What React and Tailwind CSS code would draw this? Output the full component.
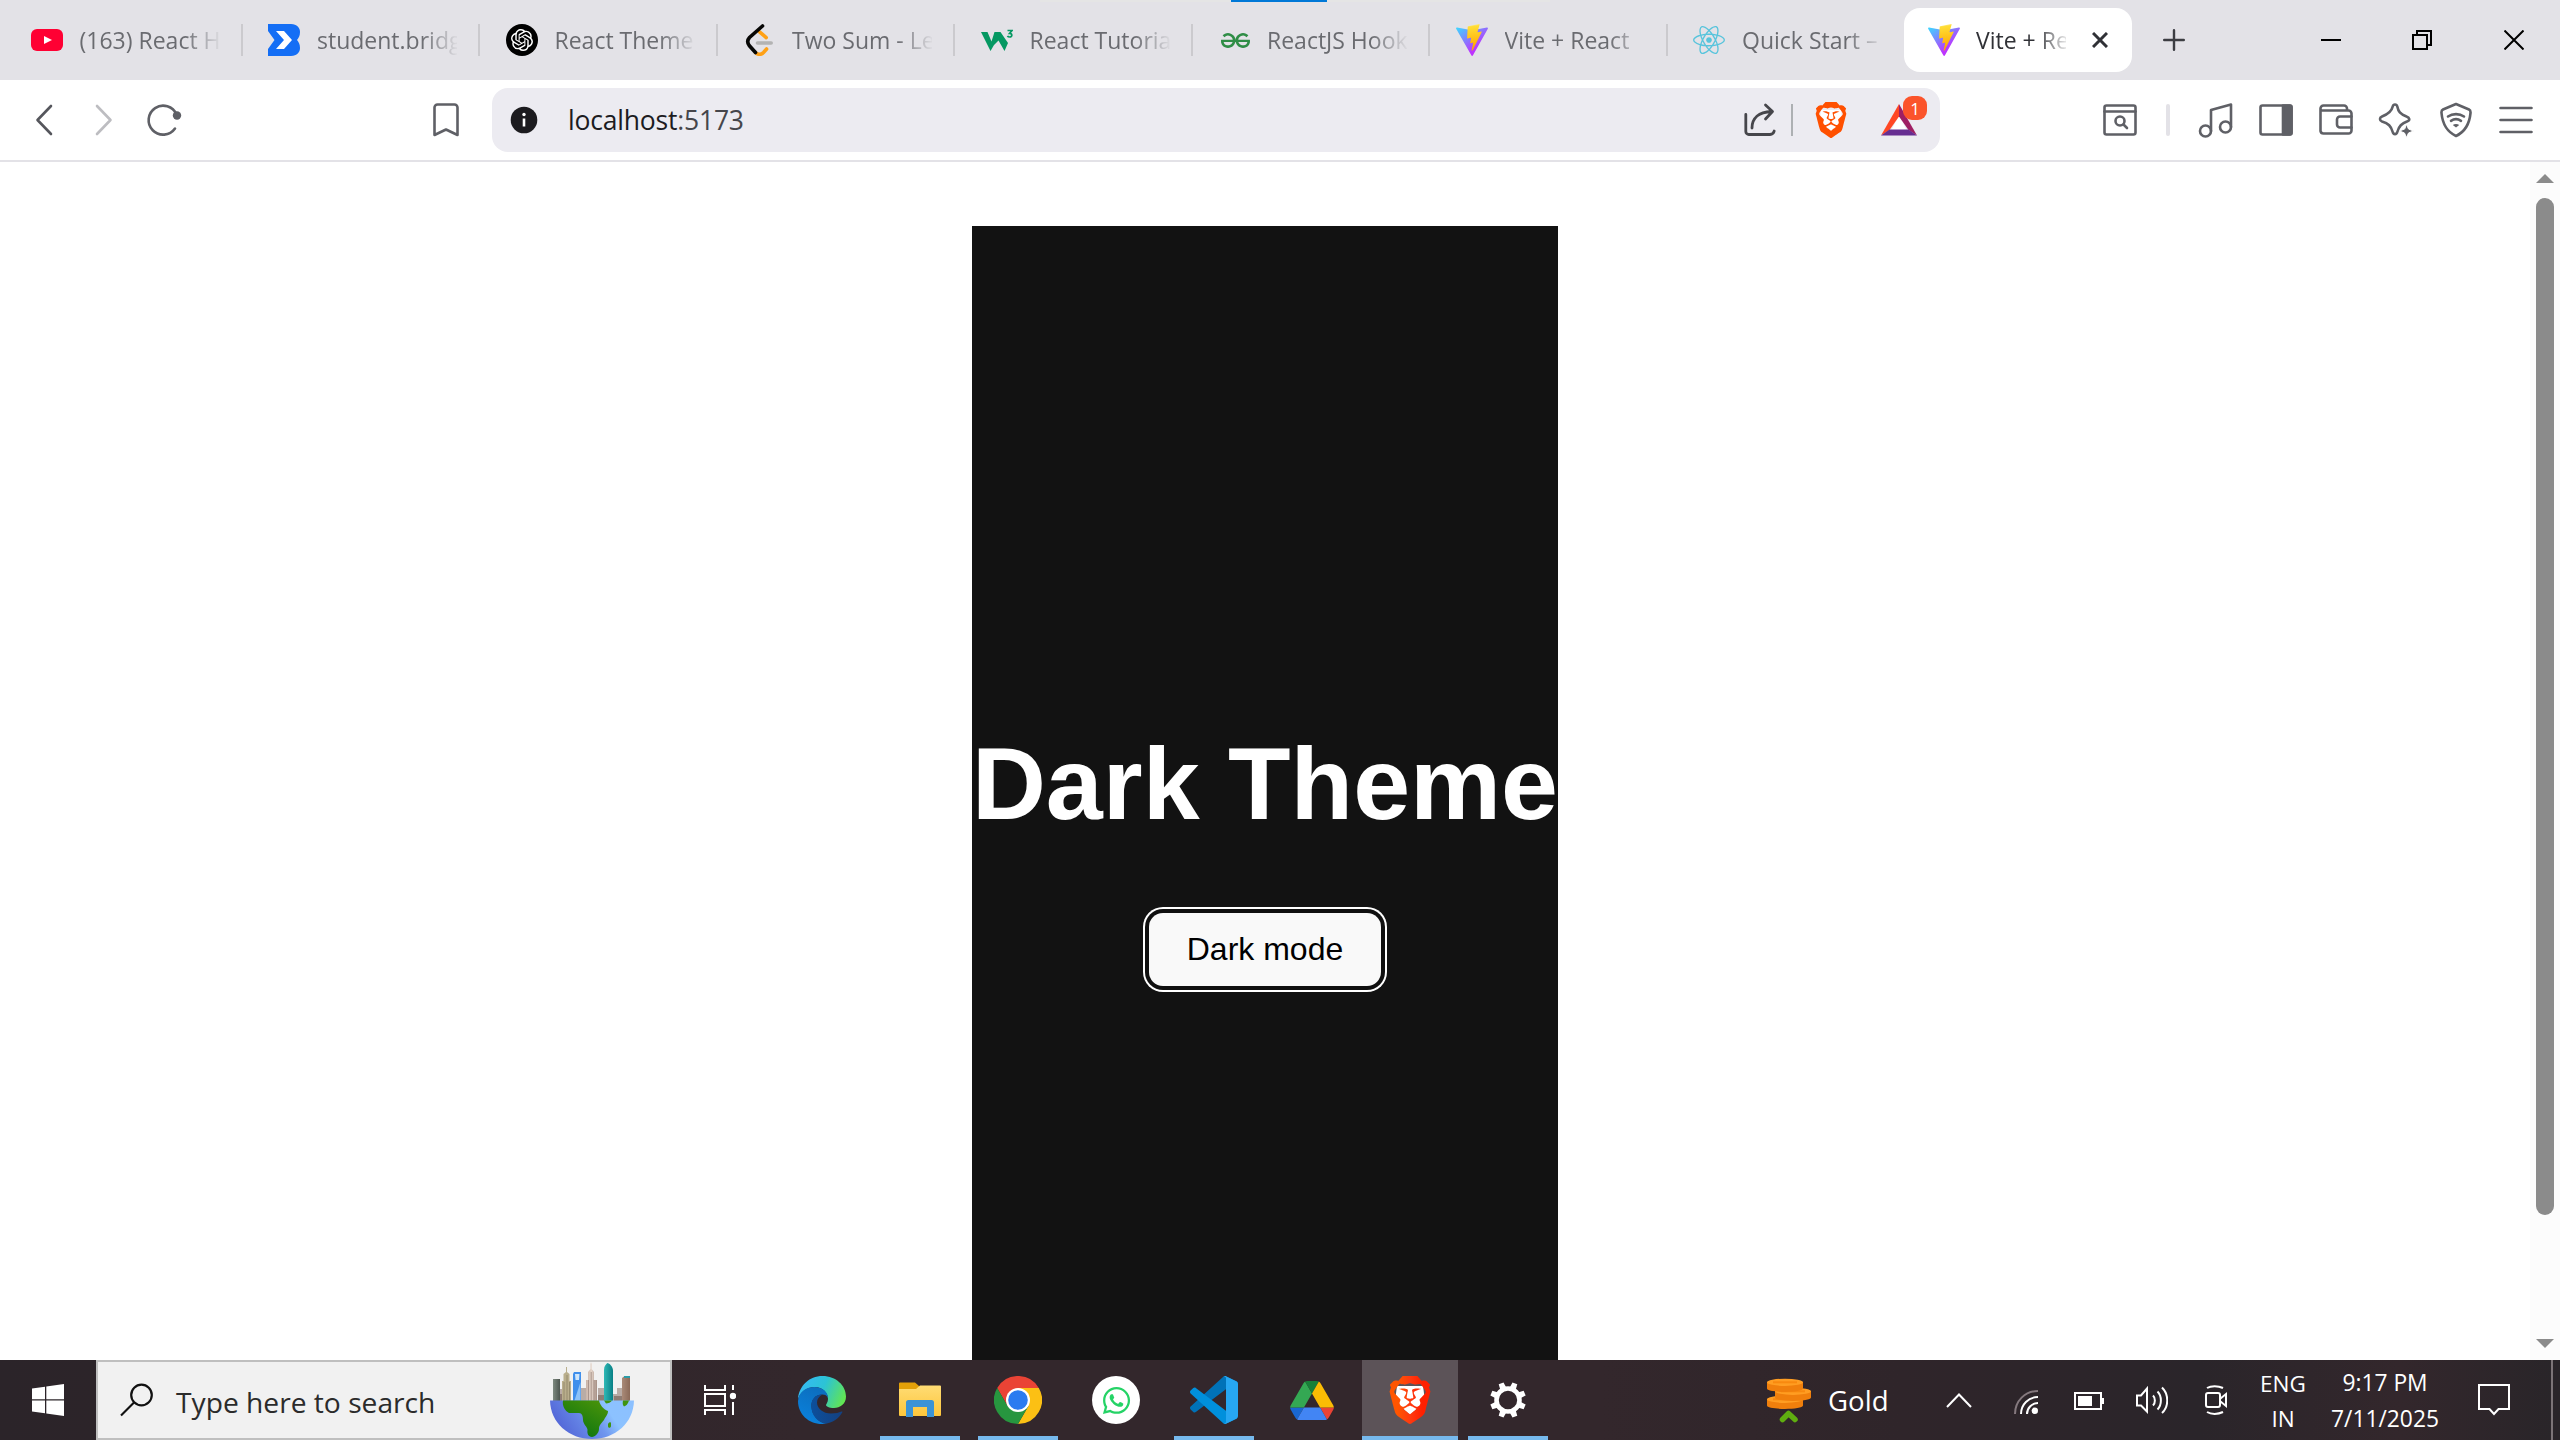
import React from "react";
import { SiOpenai, SiGeeksforgeeks, SiBrave } from "react-icons/si";
import { FaReact, FaWhatsapp } from "react-icons/fa";

function Svg({ w, h, className = "", children, ...rest }) {
  return (
    <svg width={w} height={h} viewBox={`0 0 ${w} ${h}`} fill="none" className={`flex-none ${className}`} {...rest}>
      {children}
    </svg>
  );
}

/* ---------- favicons ---------- */
function YouTubeIcon() {
  return (
    <Svg w={32} h={32}>
      <rect x="0" y="5" width="32" height="22" rx="6" fill="#ff0033" />
      <path d="M13 12v8l8-4z" fill="#fff" />
    </Svg>
  );
}

function BridgeIcon() {
  return (
    <Svg w={32} h={32}>
      <path d="M0 0H23C29 0 32 4 32 8C32 12 30.5 14 29 16C30.500 18 32 20 32 24C32 28 29 32 23 32H0V25L6.500 16L0 7Z" fill="#146ef5" />
      <path d="M8 7h8l8 9-8 9H8l8-9z" fill="#fff" />
    </Svg>
  );
}

function OpenAiIcon() {
  return (
    <span className="flex size-8 flex-none items-center justify-center rounded-full bg-black">
      <SiOpenai className="size-[22px] text-white" />
    </span>
  );
}

function LeetCodeIcon() {
  return (
    <Svg w={32} h={32} strokeLinecap="round" strokeWidth="3.6">
      <path d="M16.500 7.800L23.200 13.600M12.500 28.500C15 31 18 31 20.500 28.500L23.600 25" stroke="#ffa116" />
      <path d="M14.500 19H28.200" stroke="#b3b3b3" />
      <path d="M19.500 2L6.500 13.500C4.400 15.800 4.400 19 6.200 21.500L12.500 28.500" stroke="#070706" />
    </Svg>
  );
}

function W3Icon() {
  return (
    <Svg w={32} h={32}>
      <path d="M0 8H6.500L10.500 17.500L13.500 8H19.500L27 19L23.500 27L17.500 16.500L13 21L9.500 27Z" fill="#059862" />
      <path d="M26.500 6.500H31L28.600 9.300C31.500 9.300 31.500 13 28.800 13C27.500 13 26.800 12.500 26.500 11.800" stroke="#059862" strokeWidth="1.7" />
    </Svg>
  );
}

function ViteIcon({ id }) {
  return (
    <svg width="32" height="32" viewBox="0 0 256 257" className="flex-none">
      <defs>
        <linearGradient id={`${id}a`} x1="-.8%" x2="57.600%" y1="7.600%" y2="78.400%">
          <stop offset="0" stopColor="#41D1FF" />
          <stop offset="1" stopColor="#BD34FE" />
        </linearGradient>
        <linearGradient id={`${id}b`} x1="43.400%" x2="50.300%" y1="2.200%" y2="89%">
          <stop offset="0" stopColor="#FFEA83" />
          <stop offset=".08" stopColor="#FFDD35" />
          <stop offset="1" stopColor="#FFA800" />
        </linearGradient>
      </defs>
      <path fill={`url(#${id}a)`} d="M255.153 37.938L134.897 252.976c-2.483 4.440-8.862 4.466-11.382.048L.875 37.958c-2.746-4.814 1.371-10.646 6.827-9.670l120.385 21.517a6.537 6.537 0 0 0 2.322-.004l117.867-21.483c5.438-.991 9.574 4.796 6.877 9.620Z" />
      <path fill={`url(#${id}b)`} d="M185.432.063L96.440 17.501a3.268 3.268 0 0 0-2.634 3.014l-5.474 92.456a3.268 3.268 0 0 0 3.997 3.378l24.777-5.718c2.318-.535 4.413 1.507 3.936 3.838l-7.361 36.047c-.495 2.426 1.782 4.500 4.151 3.780l15.304-4.649c2.372-.720 4.652 1.360 4.150 3.788l-11.698 56.621c-.732 3.542 3.979 5.473 5.943 2.437l1.313-2.028l72.516-144.720c1.215-2.423-.880-5.186-3.540-4.672l-25.505 4.922c-2.396.462-4.435-1.770-3.759-4.114l16.646-57.705c.677-2.350-1.370-4.583-3.769-4.113Z" />
    </svg>
  );
}

/* ---------- tab strip ---------- */
const tabs = [
  { title: "(163) React H", icon: <YouTubeIcon /> },
  { title: "student.bridg", icon: <BridgeIcon /> },
  { title: "React Theme", icon: <OpenAiIcon /> },
  { title: "Two Sum - Le", icon: <LeetCodeIcon /> },
  { title: "React Tutoria", icon: <W3Icon /> },
  {
    title: "ReactJS Hook",
    icon: (
      <span className="flex size-8 flex-none items-center justify-center">
        <SiGeeksforgeeks className="ml-[2px] size-[29px] text-[#2f8d46]" />
      </span>
    ),
  },
  { title: "Vite + React", icon: <ViteIcon id="v1" /> },
  { title: "Quick Start –", icon: <FaReact className="size-8 flex-none text-[#58c4dc]" /> },
];

function TabStrip() {
  return (
    <header className="relative flex h-[80px] flex-none items-center bg-[#e3e2e7] pl-[5px]">
      <div className="absolute left-[1040px] top-0 flex h-[2px] w-[510px] justify-center bg-[#e5e5e5] pr-[32px]">
        <div className="h-full w-[96px] bg-[#0078d7]" />
      </div>
      {tabs.map((t, i) => (
        <div key={t.title} className="flex h-[64px] w-[237.500px] flex-none items-center pl-[25.500px]">
          {t.icon}
          <span className="ml-[17px] w-[140px] flex-none overflow-hidden whitespace-nowrap text-[23px] leading-[32px] text-[#6a6b70] [mask-image:linear-gradient(to_right,black_104px,transparent_142px)]">
            {t.title}
          </span>
          <span className={i === tabs.length - 1 ? "hidden" : "ml-auto h-[32px] w-[2px] bg-[#cbcace]"} />
        </div>
      ))}
      <div className="-ml-[1px] flex h-[64px] w-[228px] flex-none items-center rounded-[16px] bg-white pl-[24px]">
        <ViteIcon id="v2" />
        <span className="ml-[16px] w-[90px] flex-none overflow-hidden whitespace-nowrap text-[23px] leading-[32px] text-[#303136] [mask-image:linear-gradient(to_right,black_60px,transparent_94px)]">
          Vite + Re
        </span>
        <Svg w={16} h={16} className="ml-[26px]" stroke="#303136" strokeWidth="3">
          <path d="M1 1L15 15M15 1L1 15" />
        </Svg>
      </div>
      <Svg w={22} h={22} className="ml-[31px]" stroke="#3c3d42" strokeWidth="2.400" strokeLinecap="round">
        <path d="M11 1.200V20.800M1.200 11H20.800" />
      </Svg>
      <div className="ml-auto flex h-full">
        <div className="flex w-[92px] items-center justify-center">
          <Svg w={20} h={20} stroke="#000" strokeWidth="2"><path d="M0 10H20" /></Svg>
        </div>
        <div className="flex w-[90px] items-center justify-center">
          <Svg w={20} h={20} stroke="#000" strokeWidth="2"><path d="M1 5H15V19H1ZM5 5V1H19V15H15" /></Svg>
        </div>
        <div className="flex w-[93px] items-center justify-center">
          <Svg w={20} h={20} stroke="#000" strokeWidth="2"><path d="M0.500 0.500L19.500 19.500M19.500 0.500L0.500 19.500" /></Svg>
        </div>
      </div>
    </header>
  );
}

/* ---------- toolbar ---------- */
function Cell({ children }) {
  return <div className="flex h-full w-[60px] flex-none items-center justify-center">{children}</div>;
}

const line = { stroke: "#5f6066", strokeWidth: 2.6, strokeLinecap: "round", strokeLinejoin: "round" };

function Toolbar() {
  return (
    <nav className="flex h-[82px] flex-none items-center border-b-2 border-[#e3e2e7] bg-white pl-[14px]">
      <Cell><Svg w={18} h={32} {...line} stroke="#55565c"><path d="M16 2L2.500 16L16 30" /></Svg></Cell>
      <Cell><Svg w={18} h={32} {...line} stroke="#bdbdc1"><path d="M2 2L15.500 16L2 30" /></Svg></Cell>
      <Cell>
        <Svg w={36} h={36} {...line} className="-mt-[2px]">
          <path d="M29 27.500A14.500 14.500 0 1 1 30.500 13.500" />
          <circle cx="31" cy="14.500" r="4.200" fill="#5f6066" stroke="none" />
        </Svg>
      </Cell>
      <div className="ml-[222px] flex h-full w-[60px] items-center justify-center">
        <Svg w={26} h={34} {...line}><path d="M1.500 4.500A3 3 0 0 1 4.500 1.500H21.500A3 3 0 0 1 24.500 4.500V32L13 26.500L1.500 32Z" /></Svg>
      </div>

      <div className="ml-[16px] flex h-[64px] w-[1448px] flex-none items-center rounded-[16px] bg-[#ecebf1] pl-[18px]">
        <Svg w={28} h={28}>
          <circle cx="14" cy="14" r="13.300" fill="#1c1b1f" />
          <circle cx="14" cy="8.500" r="1.700" fill="#fff" />
          <path d="M14 12.500V20.500" stroke="#fff" strokeWidth="2.600" />
        </Svg>
        <span className="ml-[30px] whitespace-nowrap text-[26.500px] leading-[36px] tracking-[-0.2px] text-[#1c1b1f]">
          localhost<span className="text-[#46464b]">:5173</span>
        </span>
        <Svg w={32} h={34} className="ml-auto" stroke="#46464b" strokeWidth="2.800" strokeLinecap="round" strokeLinejoin="round">
          <path d="M1.800 11.500V28.500A3 3 0 0 0 4.800 31.500H26A4.500 4.500 0 0 0 30.200 28" />
          <path d="M8 25C8 15.500 14.500 9 27.500 8.500M21.500 2L28.500 8.500L21.500 16" />
        </Svg>
        <span className="ml-[15px] h-[32px] w-[2px] bg-[#adb0b3]" />
        <span className="relative ml-[20px] flex size-[36px] items-center justify-center">
          <svg viewBox="0 0 36 36" className="absolute inset-0"><path d="M8 8H28L29 19L18 29L7 19Z" fill="#fff" /></svg>
          <SiBrave className="relative size-[36px] text-[#ff5000]" />
        </span>
        <span className="relative ml-[32px] mr-[23px] flex h-[36px] w-[36px] items-center">
          <Svg w={36} h={32}>
            <path d="M18 11L26 27H10Z" fill="#fff" />
            <path d="M18 0V12.500L8.500 26L0 31.500Z" fill="#ff4724" />
            <path d="M18 0V12.500L27.500 26L36 31.500Z" fill="#9e1f63" />
            <path d="M0 31.500L8.500 25.500H27.500L36 31.500Z" fill="#662d91" />
          </Svg>
          <span className="absolute -top-[6px] left-[22px] flex h-[24px] w-[24px] items-center justify-center rounded-[9px] bg-[#fb542b] text-[17px] font-medium leading-none text-white">1</span>
        </span>
      </div>

      <div className="ml-auto flex h-full pr-[14px]">
        <Cell>
          <Svg w={34} h={32} {...line}>
            <rect x="1.500" y="1.500" width="31" height="29" rx="2" />
            <path d="M1.500 7.500H32.500" />
            <circle cx="17" cy="17" r="4.500" />
            <path d="M20.500 20.500L24 24" />
          </Svg>
        </Cell>
        <div className="flex w-[36px] items-center justify-center"><span className="h-[32px] w-[4px] rounded-full bg-[#e3e2e7]" /></div>
        <Cell>
          <Svg w={36} h={36} {...line}>
            <circle cx="7.500" cy="29" r="5.500" /><circle cx="27.500" cy="25" r="5.500" />
            <path d="M13 29V8L33 2.500V25" />
          </Svg>
        </Cell>
        <Cell>
          <Svg w={34} h={32} {...line}>
            <rect x="1.500" y="1.500" width="31" height="29" rx="2" />
            <path d="M24 1.500H31A1.500 1.500 0 0 1 32.500 3V29A1.500 1.500 0 0 1 31 30.500H24Z" fill="#5f6066" />
          </Svg>
        </Cell>
        <Cell>
          <Svg w={34} h={32} {...line}>
            <path d="M1.500 6V27A3 3 0 0 0 4.500 29.500H29.500A3 3 0 0 0 32.500 26.500V9.500A3 3 0 0 0 29.500 6.500H3M1.500 6V4.500A3 3 0 0 1 4.500 1.500H25A3 3 0 0 1 28 4.500V6.500" />
            <path d="M32.500 12.500H21A3 3 0 0 0 18 15.500V20.500A3 3 0 0 0 21 23.500H32.500" />
          </Svg>
        </Cell>
        <Cell>
          <Svg w={36} h={36} {...line}>
            <path d="M17 2.500C18.200 2.500 19 3.300 19.300 4.500C20.300 9.500 22 12 28.500 14.500C32 15.700 32 18.300 29.500 19.300C23.500 21.500 21 24 19.300 30C18.700 32.800 15.300 32.800 14.700 30C13 24 10.500 21.500 4 19.500C1.300 18.500 1.300 15.500 4 14.500C10.500 12 13.700 9.500 14.700 4.500C15 3.300 15.800 2.500 17 2.500Z" />
            <path d="M28.500 22.500L30.500 27L35.500 29L30.500 31L28.500 35.500L26.500 31L21.500 29L26.500 27Z" fill="#5f6066" stroke="#fff" strokeWidth="1" />
          </Svg>
        </Cell>
        <Cell>
          <Svg w={32} h={36} {...line}>
            <path d="M16 2L29 7.500C30.500 8.200 30.700 9 30.500 11C29.500 22 25.500 29.500 16 34C6.500 29.500 2.500 22 1.500 11C1.300 9 1.500 8.200 3 7.500Z" />
            <path d="M8 14.500C12.500 11.300 19.500 11.300 24 14.500M11 18.800C14 16.800 18 16.800 21 18.800" />
            <path d="M12.800 23C14.500 21.500 17.500 21.500 19.200 23L16 25.500Z" fill="#5f6066" stroke="none" />
          </Svg>
        </Cell>
        <Cell>
          <Svg w={34} h={28} {...line}><path d="M1.500 2H32.500M1.500 14H32.500M1.500 26H32.500" /></Svg>
        </Cell>
      </div>
    </nav>
  );
}

/* ---------- page ---------- */
function Page() {
  return (
    <div className="flex h-[1198px] flex-none overflow-hidden bg-white">
      <main className="flex flex-1 justify-center pt-[64px]">
        <section className="flex h-[1440px] w-[586px] flex-none flex-col items-center bg-[#121212] pt-[502px] font-['Liberation_Sans',Arial,sans-serif]">
          <h1 className="whitespace-nowrap text-[102.400px] font-bold leading-[112px] text-white">Dark Theme</h1>
          <button className="mt-[73px] h-[73px] w-[232px] rounded-[14px] bg-[#f9f9f9] text-[32px] leading-[73px] text-black shadow-[0_0_0_4px_#101010,0_0_0_6px_#ffffff]">
            Dark mode
          </button>
        </section>
      </main>
      <aside className="flex w-[30px] flex-none flex-col items-center bg-[#fcfcfc] pr-0 pt-[12px]">
        <Svg w={18} h={9}><path d="M9 0L18 9H0Z" fill="#8b8b8b" /></Svg>
        <div className="mt-[15px] h-[1017px] w-[18px] rounded-full bg-[#8b8b8b]" />
        <Svg w={18} h={9} className="mt-[124px]"><path d="M0 0H18L9 9Z" fill="#8b8b8b" /></Svg>
      </aside>
    </div>
  );
}

/* ---------- taskbar ---------- */
function CityGlobe() {
  return (
    <Svg w={84} h={78}>
      <defs>
        <linearGradient id="sea" x1="0" x2="1" y1="0.300" y2="0">
          <stop offset="0" stopColor="#5468d8" />
          <stop offset=".45" stopColor="#6f96ee" />
          <stop offset=".65" stopColor="#8cc2ff" />
          <stop offset="1" stopColor="#8cc0ff" />
        </linearGradient>
        <linearGradient id="land" x1="1" x2="0.300" y1="0" y2="1">
          <stop offset="0" stopColor="#4f960a" />
          <stop offset="1" stopColor="#0a7410" />
        </linearGradient>
        <linearGradient id="brick" x1="0" x2="1"><stop offset="0" stopColor="#a98a78" /><stop offset="1" stopColor="#8b6a58" /></linearGradient>
        <linearGradient id="stone" x1="0" x2="1"><stop offset="0" stopColor="#c9b4a8" /><stop offset=".5" stopColor="#e3d3c8" /><stop offset="1" stopColor="#a58f84" /></linearGradient>
        <linearGradient id="teal" x1="0" x2="1"><stop offset="0" stopColor="#2fb9b6" /><stop offset="1" stopColor="#087f85" /></linearGradient>
        <linearGradient id="grey" x1="0" x2="1"><stop offset="0" stopColor="#7e8a80" /><stop offset="1" stopColor="#4d5650" /></linearGradient>
      </defs>
      <path d="M10 27H14V22H18V40H10ZM30 26H36V40H30ZM48 26H55V40H48ZM62 32H67V26H72V40H62Z" fill="#b9aca6" />
      <path d="M9 32H18V40H9ZM48 33H54V40H48ZM64 34H72V40H64Z" fill="#8f7d74" />
      <rect x="3" y="17" width="7" height="23" fill="url(#grey)" />
      <path d="M12 40V19H13.500V12L16 10V5H17V10L19.500 12V19H21V40Z" fill="#b9ae8c" />
      <path d="M14 20V40M17 13V40M19.500 20V40" stroke="#8d8468" strokeWidth=".8" />
      <path d="M23 12L24 10H31V40H23Z" fill="#3f8fec" />
      <path d="M25 12H29.500L29 18H25.500Z" fill="#cfe6fb" />
      <path d="M24 40L30.500 20V40Z" fill="#8cc2f8" />
      <path d="M36 40V18H38V10L40.500 7V2L41 0L41.700 2V7L44 10V18H47V40Z" fill="url(#stone)" />
      <path d="M38.500 18V40M41.200 10V40M44 18V40" stroke="#a48f86" strokeWidth=".9" />
      <path d="M54 40V8C54 4 56 2 57.500 1C60.500 2 63 5 63 9V40Z" fill="url(#teal)" />
      <path d="M72 16L74 14.500H80V40H72Z" fill="url(#brick)" />
      <rect x="74" y="14" width="6" height="2" fill="#2a9ca8" />
      <path d="M0 38.500H84C83.500 61 65 77 42 77C19 77 .5 61 0 38.500Z" fill="url(#sea)" />
      <path d="M13 38.500H49C50 43 53 47 58 49C58 53 55 55 54 58C51 62 49 63 49 67C49 71 45 75 42 75C38 75 37 71 37.500 68C37.500 65 33 62 33 58C33 54 32 51 29 51H19C15 49 12 44 13 38.500Z" fill="url(#land)" />
      <path d="M54 38.500H62C61 40.500 58 41.500 56 41.500ZM73 38.500H79C78 42 76 44 74 44.500C72.500 43 72.500 41 73 38.500ZM58 62C59 60 61 59.500 61 61.500V64C61 66 58.500 66.500 58 64.500Z" fill="#3f9410" />
    </Svg>
  );
}

function EdgeIcon() {
  return (
    <Svg w={48} h={48}>
      <defs>
        <linearGradient id="eg1" x1="0" x2="1" y1=".3" y2=".6"><stop offset="0" stopColor="#36b9f5" /><stop offset=".5" stopColor="#2cc3d5" /><stop offset="1" stopColor="#62e552" /></linearGradient>
        <linearGradient id="eg2" x1="0" x2=".4" y1="1" y2="0"><stop offset="0" stopColor="#0a84e0" /><stop offset="1" stopColor="#0c6fc0" /></linearGradient>
        <linearGradient id="eg3" x1="0" x2="1"><stop offset="0" stopColor="#0c4f9c" /><stop offset="1" stopColor="#14407f" /></linearGradient>
      </defs>
      <path d="M0 23C1 10 11 0 24.500 0C38 0 48 9.500 48 20.500C48 28 42 32 36 32C31 32 28 30.500 28 29C28 28 30 26.500 30 23C30 16 24 11 17 11C8 11 2 17 0 23Z" fill="url(#eg1)" />
      <path d="M0 25C1 15 9 11 16.500 11C24.500 11 30 16 30 22C29 19.500 27 18.500 24.500 18.500C17 18.500 13 24 13.500 31C14 39 20 46 28 47.600C26.500 48 25 48 24 48C10.500 48 0 38 0 25Z" fill="url(#eg2)" />
      <path d="M13.300 30C13.300 23 17.500 18.500 24.500 18.500C21 20.500 19 23 19 26.500C19 32.500 25 37.500 33 37.500C38 37.500 41 36.500 43.300 35.500C44.300 35.200 44.600 35.800 44.200 36.600C40.500 43 35 46.500 28 47.700C19.500 46.500 13.300 39 13.300 30Z" fill="url(#eg3)" />
    </Svg>
  );
}

function FolderIcon() {
  return (
    <Svg w={42} h={36}>
      <defs>
        <linearGradient id="fo" x1="0" x2="0" y1="0" y2="1"><stop offset="0" stopColor="#ffdc74" /><stop offset="1" stopColor="#fdc63c" /></linearGradient>
      </defs>
      <path d="M0 1.500A1 1 0 0 1 1 .5H16L20 4V9H0Z" fill="#e3a008" />
      <path d="M0 7H17L21 3.500H41A1 1 0 0 1 42 4.500V33A1 1 0 0 1 41 34H1A1 1 0 0 1 0 33Z" fill="url(#fo)" />
      <path d="M7 35V20.500A2.500 2.500 0 0 1 9.500 18H32.500A2.500 2.500 0 0 1 35 20.500V35H28V25H14V35Z" fill="#3b93d6" />
    </Svg>
  );
}

function ChromeIcon() {
  return (
    <Svg w={48} h={48}>
      <path d="M24 12H44.800A24 24 0 0 0 3.200 12L13.600 30L24 24Z" fill="#ea4335" />
      <path d="M44.800 12A24 24 0 0 1 24 48L34.400 30L24 24V12Z" fill="#fcc014" />
      <path d="M24 48A24 24 0 0 1 3.200 12L13.600 30L24 26L34.400 30Z" fill="#27963f" />
      <circle cx="24" cy="24" r="12" fill="#fff" />
      <circle cx="24" cy="24" r="9.800" fill="#2b7bf0" />
    </Svg>
  );
}

function VsCodeIcon() {
  return (
    <svg width="48" height="48" viewBox="0 0 100 100">
      <path fill="#0072b8" d="M96.461 10.796L75.857.876C73.472-.273 70.622.212 68.750 2.083L1.299 63.583C-.516 65.237-.514 68.094 1.303 69.745L6.813 74.754C8.298 76.104 10.535 76.204 12.134 74.991L93.361 13.370C96.086 11.303 100 13.246 100 16.667V16.427C100 14.026 98.625 11.838 96.461 10.796Z" />
      <path fill="#0090dc" d="M96.461 89.204L75.857 99.124C73.472 100.273 70.622 99.788 68.750 97.917L1.299 36.417C-.516 34.763-.514 31.906 1.303 30.255L6.813 25.246C8.298 23.896 10.535 23.796 12.134 25.009L93.361 86.630C96.086 88.697 100 86.754 100 83.333V83.573C100 85.973 98.625 88.162 96.461 89.204Z" />
      <path fill="#27a7f2" d="M75.858 99.126C73.472 100.274 70.622 99.788 68.750 97.917C71.056 100.223 75 98.590 75 95.328V4.672C75 1.410 71.056-.223 68.750 2.083C70.622.211 73.472-.274 75.858.874L96.459 10.781C98.623 11.822 100 14.011 100 16.413V83.587C100 85.989 98.623 88.179 96.459 89.220L75.858 99.126Z" />
    </svg>
  );
}

function DriveIcon() {
  return (
    <svg width="44" height="39" viewBox="0 0 87.300 78">
      <path fill="#1967d2" d="m6.600 66.850 3.850 6.650c.8 1.400 1.950 2.500 3.300 3.300l13.750-23.800h-27.500c0 1.550.4 3.100 1.200 4.500z" />
      <path fill="#34a853" d="m43.650 25-13.750-23.800c-1.350.8-2.500 1.900-3.300 3.300l-25.400 44a9.060 9.060 0 0 0 -1.200 4.500h27.500z" />
      <path fill="#ea4335" d="m73.550 76.800c1.350-.8 2.500-1.900 3.300-3.300l1.600-2.750 7.650-13.250c.8-1.400 1.200-2.950 1.200-4.500h-27.502z" />
      <path fill="#188038" d="m43.650 25 13.750-23.800c-1.350-.8-2.900-1.200-4.500-1.200h-18.500c-1.600 0-3.150.45-4.500 1.200z" />
      <path fill="#4285f4" d="m59.800 53h-32.300l-13.750 23.800c1.350.8 2.900 1.200 4.500 1.200h50.800c1.600 0 3.150-.45 4.500-1.200z" />
      <path fill="#fbbc04" d="m73.400 26.500-12.700-22c-.8-1.400-1.950-2.500-3.300-3.300l-13.750 23.800 16.150 28h27.450c0-1.550-.4-3.100-1.200-4.500z" />
    </svg>
  );
}

function GearIcon() {
  return (
    <Svg w={36} h={36}>
      <circle cx="18" cy="18" r="11.500" stroke="#fff" strokeWidth="4.600" />
      {[22.5, 67.5, 112.5, 157.5, 202.5, 247.5, 292.5, 337.5].map((a) => (
        <path key={a} d="M14.800 6L15.400 0H20.600L21.200 6Z" fill="#fff" transform={`rotate(${a} 18 18)`} />
      ))}
    </Svg>
  );
}

function BraveIcon() {
  return (
    <span className="relative flex size-[48px] items-center justify-center">
      <svg viewBox="0 0 48 48" className="absolute inset-0">
        <defs>
          <linearGradient id="br" x1="0" x2="1"><stop offset=".2" stopColor="#ff5500" /><stop offset=".5" stopColor="#ff3a10" /><stop offset=".8" stopColor="#ff2000" /></linearGradient>
        </defs>
        <path d="M11 10H37L39 25L24 39L9 25Z" fill="#fff" />
      </svg>
      <SiBrave className="relative size-[48px]" fill="url(#br)" />
    </span>
  );
}

const apps = [
  { name: "edge", icon: <EdgeIcon />, state: "idle" },
  { name: "explorer", icon: <FolderIcon />, state: "open" },
  { name: "chrome", icon: <ChromeIcon />, state: "open" },
  {
    name: "whatsapp",
    icon: (
      <span className="flex size-[48px] items-center justify-center rounded-full bg-white">
        <FaWhatsapp className="size-[31px] text-[#25d366]" />
      </span>
    ),
    state: "idle",
  },
  { name: "vscode", icon: <VsCodeIcon />, state: "open" },
  { name: "drive", icon: <DriveIcon />, state: "idle" },
  { name: "brave", icon: <BraveIcon />, state: "active" },
  { name: "settings", icon: <GearIcon />, state: "open" },
];

const cellStyles = {
  idle: "relative flex h-full w-[96px] items-center justify-center",
  open: "relative flex h-full w-[96px] items-center justify-center",
  active: "relative flex h-full w-[96px] items-center justify-center bg-[#5c5358]",
};
const markStyles = {
  idle: "hidden",
  open: "absolute bottom-0 left-[8px] h-[4px] w-[80px] bg-[#76b9ed]",
  active: "absolute bottom-0 left-0 h-[4px] w-[96px] bg-[#76b9ed]",
};

function GoldIcon() {
  const coin = (x, y) => (
    <g transform={`translate(${x} ${y})`}>
      <path d="M0 3.500V10C0 14.500 36 14.500 36 10V3.500Z" fill="#f07f0c" />
      <ellipse cx="18" cy="3.800" rx="18" ry="3.600" fill="#ff9d22" />
      <path d="M6 3.800H30" stroke="#f8890f" strokeWidth="2" />
    </g>
  );
  return (
    <Svg w={44} h={46} className="mt-[2px]">
      {coin(0, 17.500)}
      {coin(8, 9.500)}
      {coin(0, 0.500)}
      <path d="M15.500 41.500L21.500 35.500L28 41.500" stroke="#5fae10" strokeWidth="5.500" strokeLinecap="round" strokeLinejoin="round" />
    </Svg>
  );
}

function Taskbar() {
  return (
    <footer className="flex h-[80px] flex-none items-center overflow-hidden bg-[linear-gradient(90deg,#2b2429_0px,#2c2429_96px,#33272c_800px,#33272c_1600px,#2f252a_1900px,#2a252a_2200px,#33272c_2400px,#292529_2560px)] text-white">
      <div className="flex w-[96px] items-center justify-center">
        <Svg w={32} h={32}>
          <path d="M0 4.500L13 2.700V15.300H0ZM14.300 2.500L32 0V15.300H14.300ZM0 16.600H13V29.300L0 27.500ZM14.300 16.600H32V32L14.300 29.500Z" fill="#fff" />
        </Svg>
      </div>
      <div className="flex h-[80px] w-[576px] flex-none items-center border-2 border-[#bfbfbf] bg-[#f1f1f1] pl-[22px]">
        <Svg w={34} h={34} stroke="#111" strokeWidth="2.200">
          <circle cx="21.500" cy="12" r="10.300" />
          <path d="M14 19.500L1 32.500" />
        </Svg>
        <span className="ml-[22px] mt-[4px] whitespace-nowrap text-[28.200px] leading-[38px] text-[#2b2b2b]">Type here to search</span>
        <div className="ml-auto mr-[36px] mt-[2px]"><CityGlobe /></div>
      </div>
      <div className="flex w-[102px] items-center justify-center pr-[8px]">
        <Svg w={32} h={30} className="ml-[2px]" stroke="#fff" strokeWidth="2">
          <path d="M1 0V5H21V0M1 9H21V21H1ZM1 30V25H21V30M29 0V5M29 17V30" />
          <circle cx="29" cy="11" r="3.200" fill="#fff" stroke="none" />
        </Svg>
      </div>
      <div className="flex h-full gap-[2px]">
        {apps.map((a) => (
          <div key={a.name} className={cellStyles[a.state]}>
            {a.icon}
            <span className={markStyles[a.state]} />
          </div>
        ))}
      </div>
      <div className="ml-[211px] flex h-full items-center">
        <GoldIcon />
        <span className="ml-[17px] w-[60px] whitespace-nowrap text-[27.600px] leading-[38px]">Gold</span>
        <Svg w={26} h={15} className="ml-[58px]" stroke="#fff" strokeWidth="2"><path d="M1 14L13 1.500L25 14" /></Svg>
        <Svg w={24} h={24} className="ml-[42px] mt-[4px]" stroke="#fff" strokeWidth="2">
          <path d="M1 24C1 11 11 1 24 1" stroke="#85797e" />
          <path d="M7 24C7 14.500 14.500 7 24 7M13 24C13 18 18 13 24 13" />
          <circle cx="20.800" cy="20.800" r="3.200" fill="#fff" stroke="none" />
        </Svg>
        <Svg w={30} h={18} className="ml-[36px] mt-[2px]">
          <rect x="1" y="1" width="26" height="16" stroke="#fff" strokeWidth="2" />
          <rect x="4" y="4" width="14" height="10" fill="#fff" />
          <rect x="28" y="6" width="2" height="6" fill="#fff" />
        </Svg>
        <Svg w={32} h={28} className="ml-[32px]" stroke="#fff" strokeWidth="2">
          <path d="M1 9.500V19.500H5L11 25.500V2.500L5 9.500Z" />
          <path d="M17 9.500C19.500 12 19.500 17 17 19.500M21.500 5.500C26 10 26 19 21.500 23.500M26 1.500C33 8.500 33 20.500 26 27" />
        </Svg>
        <Svg w={22} h={30} className="ml-[37px]" stroke="#fff" strokeWidth="2">
          <rect x="1" y="8" width="14" height="14" rx="2" />
          <path d="M15.500 13.500L21 9V21L15.500 16.500M2 3C6 .5 13 .5 18 3M2 27C6 29.500 13 29.500 18 27" />
        </Svg>
        <div className="ml-[32px] mt-[2px] flex w-[48px] flex-col items-center whitespace-nowrap text-[22.500px] leading-[35px]">
          <span>ENG</span>
          <span>IN</span>
        </div>
        <div className="ml-[22px] mt-[1px] flex w-[112px] flex-col items-center whitespace-nowrap text-[22.800px] leading-[36px]">
          <span>9:17 PM</span>
          <span>7/11/2025</span>
        </div>
        <Svg w={32} h={32} className="ml-[37px]" stroke="#fff" strokeWidth="2">
          <path d="M1 1H31V25H20.500L16 30L11.500 25H1Z" />
        </Svg>
        <span className="ml-[41px] h-[80px] w-[2px] bg-[#7b7477]" />
      </div>
    </footer>
  );
}

export default function App() {
  return (
    <div className="flex h-[1440px] w-[2560px] flex-col overflow-hidden bg-white font-['Open_Sans','Noto_Sans',sans-serif]">
      <TabStrip />
      <Toolbar />
      <Page />
      <Taskbar />
    </div>
  );
}
